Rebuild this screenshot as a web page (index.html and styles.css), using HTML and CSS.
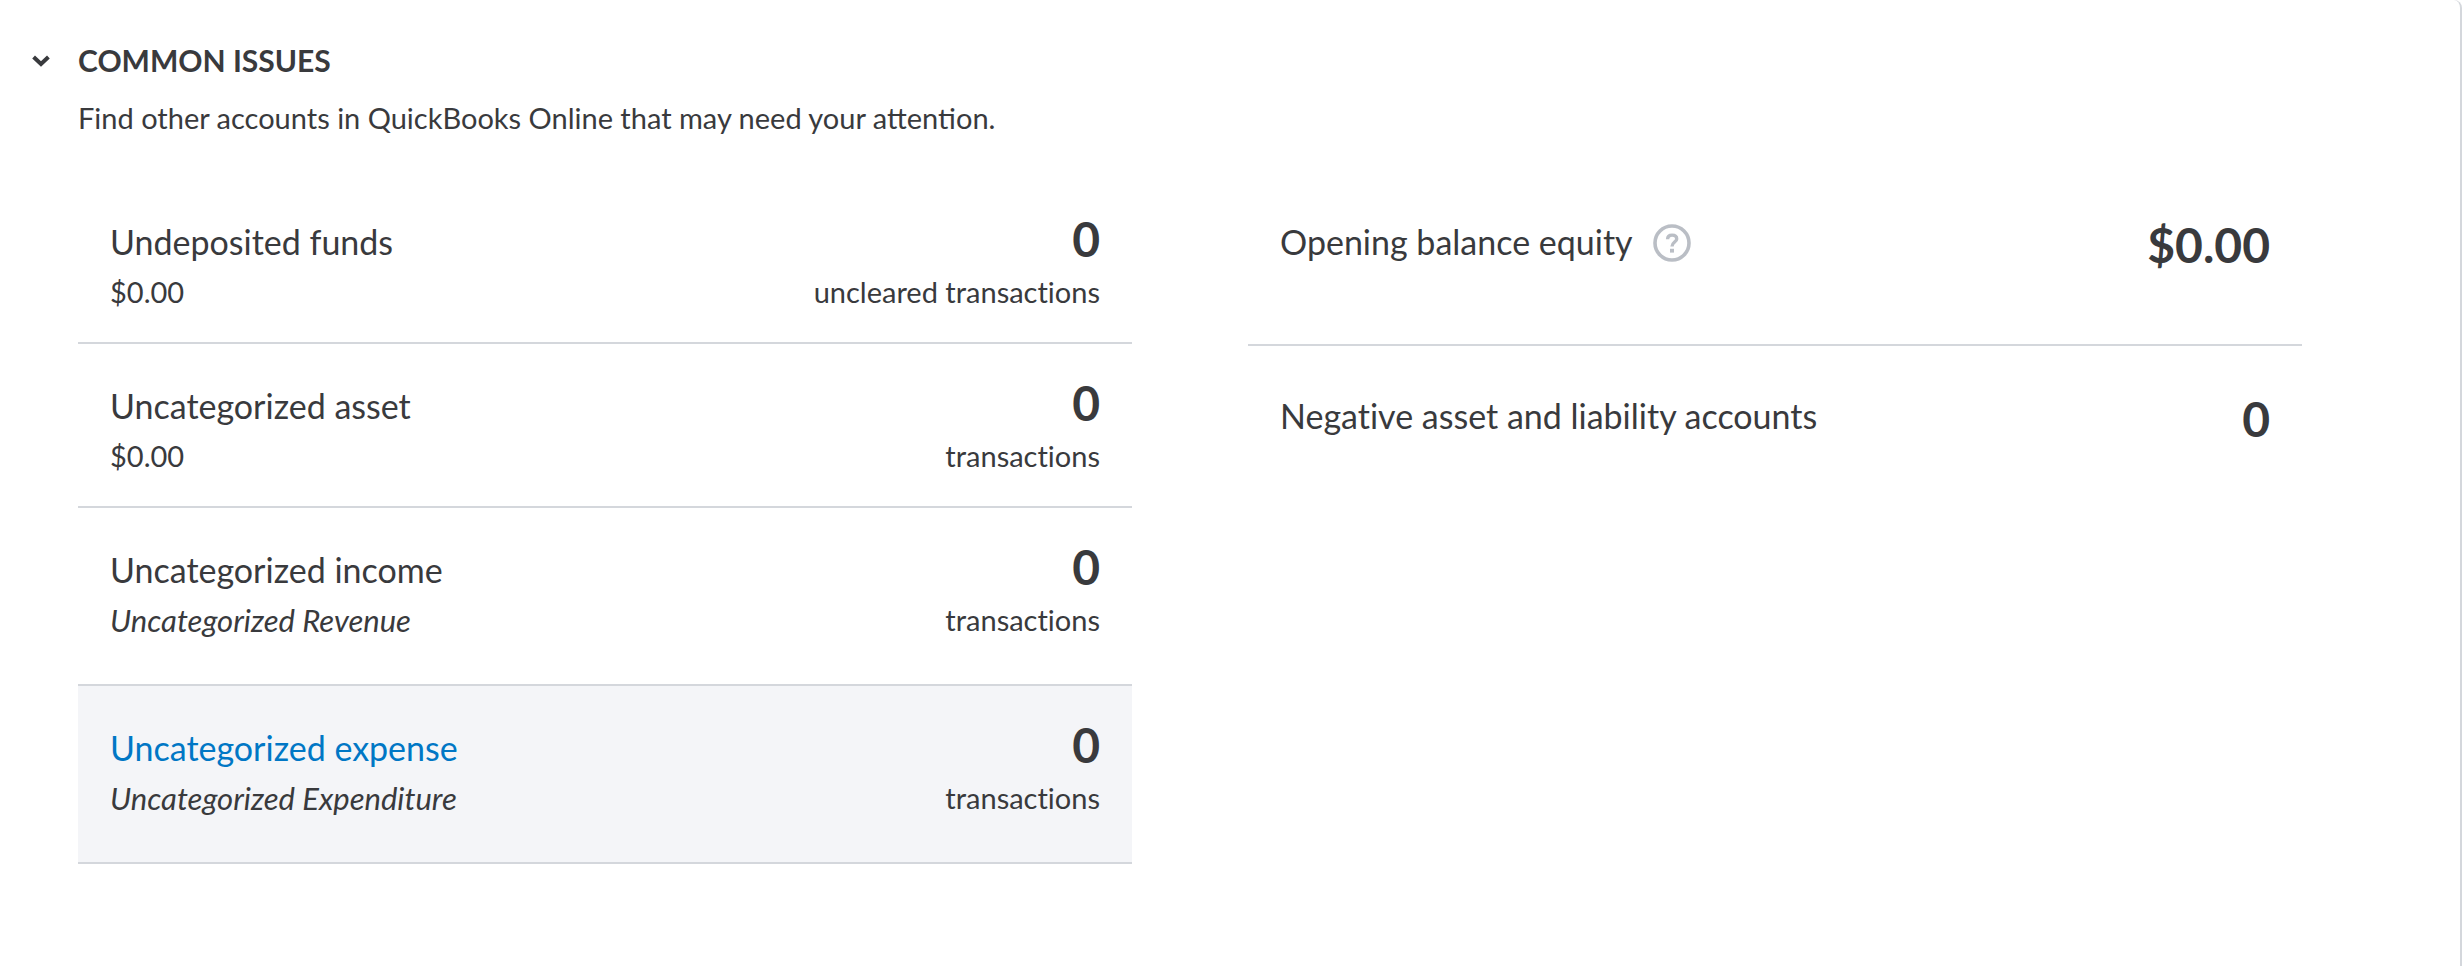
FILE: index.html
```html
<!DOCTYPE html>
<html lang="en">
<head>
    <meta charset="UTF-8">
    <meta name="viewport" content="width=device-width, initial-scale=1.0">
    <title>Common Issues</title>
    <link rel="stylesheet" href="styles.css">
</head>
<body>

<section class="panel">
    <div class="panel-header">
        <button class="toggle" type="button" aria-label="Collapse common issues" aria-expanded="true">
            <svg class="chevron" viewBox="0 0 18 12" aria-hidden="true">
                <path d="M1.6 2 L9 9 L16.4 2" fill="none" stroke="currentColor" stroke-width="4"/>
            </svg>
        </button>
        <h1>Common Issues</h1>
    </div>
    <p class="intro">Find other accounts in QuickBooks Online that may need your attention.</p>

    <div class="columns">
        <!-- Accounts with transactions to review -->
        <div class="column">
            <div class="item">
                <div class="account">
                    <a class="name" href="#">Undeposited funds</a>
                    <span class="detail">$0.00</span>
                </div>
                <div class="total">
                    <span class="amount">0</span>
                    <span class="detail">uncleared transactions</span>
                </div>
            </div>
            <div class="item">
                <div class="account">
                    <a class="name" href="#">Uncategorized asset</a>
                    <span class="detail">$0.00</span>
                </div>
                <div class="total">
                    <span class="amount">0</span>
                    <span class="detail">transactions</span>
                </div>
            </div>
            <div class="item item-tall">
                <div class="account">
                    <a class="name" href="#">Uncategorized income</a>
                    <em class="detail">Uncategorized Revenue</em>
                </div>
                <div class="total">
                    <span class="amount">0</span>
                    <span class="detail">transactions</span>
                </div>
            </div>
            <div class="item item-tall active">
                <div class="account">
                    <a class="name" href="#">Uncategorized expense</a>
                    <em class="detail">Uncategorized Expenditure</em>
                </div>
                <div class="total">
                    <span class="amount">0</span>
                    <span class="detail">transactions</span>
                </div>
            </div>
        </div>

        <!-- Balances -->
        <div class="column balances">
            <div class="item">
                <div class="account with-help">
                    <a class="name" href="#">Opening balance equity</a>
                    <button class="help" type="button" aria-label="Help">
                        <svg viewBox="0 0 38 38" aria-hidden="true">
                            <circle cx="19" cy="19" r="17" fill="none" stroke="currentColor" stroke-width="3.6"/>
                            <path d="M14.6 15.3 C14.6 12.4 16.6 11.1 19.1 11.1 C21.9 11.1 23.7 12.6 23.7 14.9 C23.7 18 19 18.2 19 22.4" fill="none" stroke="currentColor" stroke-width="3.4"/>
                            <rect x="17" y="24.8" width="4" height="3.8" fill="currentColor"/>
                        </svg>
                    </button>
                </div>
                <div class="total">
                    <span class="amount">$0.00</span>
                </div>
            </div>
            <div class="item">
                <div class="account">
                    <a class="name" href="#">Negative asset and liability accounts</a>
                </div>
                <div class="total">
                    <span class="amount">0</span>
                </div>
            </div>
        </div>
    </div>
</section>

</body>
</html>
```
FILE: styles.css
```css
* {
    box-sizing: border-box;
}
body {
    margin: 0;
    background-color: #fff;
    color: #393a3d;
    font-family: Lato, "Liberation Sans", sans-serif;
    font-size: 29px;
    line-height: 48px;
}
button {
    padding: 0;
    border: none;
    background: none;
    color: inherit;
    cursor: pointer;
}
.panel {
    min-height: 100vh;
    padding: 36px 158px 40px 32px;
    border-right: 2px solid #d4d7dc;
    border-top-right-radius: 8px;
}
.panel-header {
    display: flex;
    align-items: center;
    gap: 28px;
}
.toggle {
    display: flex;
    width: 18px;
    height: 48px;
    padding-top: 2px;
    align-items: center;
}
.chevron {
    width: 18px;
    height: 12px;
}
h1 {
    margin: 0;
    font-size: 30px;
    font-weight: bold;
    text-transform: uppercase;
}
.intro {
    margin: 10px 0 38px 46px;
}
.columns {
    display: grid;
    grid-template-columns: 1fr 1fr;
    align-items: start;
    gap: 116px;
    margin-left: 46px;
    font-variant-ligatures: none;
}
.item {
    display: flex;
    justify-content: space-between;
    min-height: 164px;
    padding: 38px 32px 24px;
    border-bottom: 2px solid #d4d7dc;
}
.item-tall {
    min-height: 178px;
}
.active {
    background-color: #f4f5f8;
}
.account,
.total {
    display: flex;
    flex-direction: column;
    gap: 2px;
}
.total {
    align-items: flex-end;
    margin-top: -3px;
    gap: 5px;
}
.name {
    color: inherit;
    font-size: 34px;
    text-decoration: none;
}
.active .name {
    color: #0077c5;
}
.amount {
    font-size: 48px;
    font-weight: bold;
}
em.detail {
    font-size: 31px;
}
.balances .item {
    min-height: 166px;
}
.balances .item:last-child {
    margin-top: 8px;
    border-bottom: none;
}
.balances .total {
    margin-top: 3px;
}
.with-help {
    flex-direction: row;
    align-items: flex-start;
    gap: 20px;
}
.help {
    display: flex;
    height: 50px;
    align-items: center;
    color: #babec5;
}
.help svg {
    width: 38px;
    height: 38px;
}
```
